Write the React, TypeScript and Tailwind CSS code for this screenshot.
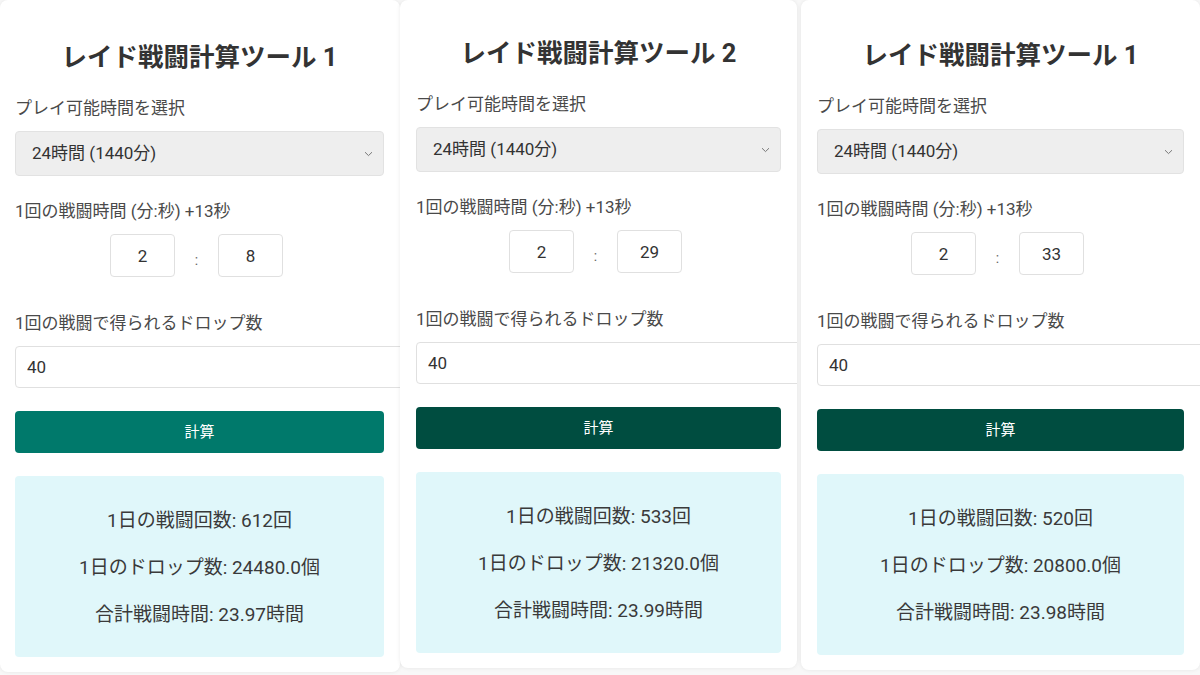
import React from "react";

type Tool = {
  title: string;
  min: string;
  sec: string;
  drops: string;
  results: string[];
  button: string;
  width: string;
  top: string;
  extra: string;
};

const tools: Tool[] = [
  {
    title: "レイド戦闘計算ツール 1",
    min: "2",
    sec: "8",
    drops: "40",
    results: ["1日の戦闘回数: 612回", "1日のドロップ数: 24480.0個", "合計戦闘時間: 23.97時間"],
    button: "bg-[#00796b]",
    width: "w-[400px] pl-[15px] pr-[16px]",
    top: "pt-[41px]",
    extra: "",
  },
  {
    title: "レイド戦闘計算ツール 2",
    min: "2",
    sec: "29",
    drops: "40",
    results: ["1日の戦闘回数: 533回", "1日のドロップ数: 21320.0個", "合計戦闘時間: 23.99時間"],
    button: "bg-[#004d40]",
    width: "w-[397px] px-[16px]",
    top: "pt-[37px]",
    extra: "",
  },
  {
    title: "レイド戦闘計算ツール 1",
    min: "2",
    sec: "33",
    drops: "40",
    results: ["1日の戦闘回数: 520回", "1日のドロップ数: 20800.0個", "合計戦闘時間: 23.98時間"],
    button: "bg-[#004d40]",
    width: "w-[399px] px-[16px]",
    top: "pt-[39px]",
    extra: "ml-[4px]",
  },
];

const font = { fontFamily: "Roboto, 'Noto Sans CJK JP', sans-serif" };

const ToolCard = ({ tool }: { tool: Tool }) => (
  <div
    className={`${tool.width} ${tool.top} ${tool.extra} pb-[15px] bg-white rounded-lg shadow-[0_0_4px_rgba(0,0,0,0.08)] overflow-hidden flex flex-col`}
  >
    <h2 className="text-[25.5px] leading-[32px] font-bold text-[#333] text-center">{tool.title}</h2>

    <div className="mt-[23px] text-[17px] leading-[24px] text-[#4a4a4a]">プレイ可能時間を選択</div>
    <div className="mt-[11px] h-[45px] flex items-center justify-between pl-[16px] pr-[10px] bg-[#eeeeee] border border-[#e2e2e2] rounded text-[17px] text-[#333]">
      <span>24時間 (1440分)</span>
      <svg width="9" height="6" viewBox="0 0 9 6" fill="none">
        <path d="M1 1.2L4.5 4.6L8 1.2" stroke="#777" strokeWidth="1" />
      </svg>
    </div>

    <div className="mt-[23px] text-[17px] leading-[24px] text-[#4a4a4a]">1回の戦闘時間 (分:秒) +13秒</div>
    <div className="mt-[11px] flex justify-center items-center pr-[6px]">
      <input
        readOnly
        value={tool.min}
        className="w-[65px] h-[43px] border border-[#e0e0e0] rounded text-center text-[17px] text-[#333] bg-white"
      />
      <span className="w-[43px] text-center text-[14px] text-[#666] pt-[10px]">:</span>
      <input
        readOnly
        value={tool.sec}
        className="w-[65px] h-[43px] border border-[#e0e0e0] rounded text-center text-[17px] text-[#333] bg-white"
      />
    </div>

    <div className="mt-[34px] text-[17px] leading-[24px] text-[#4a4a4a]">1回の戦闘で得られるドロップ数</div>
    <input
      readOnly
      value={tool.drops}
      className="mt-[11px] h-[42px] w-[calc(100%+28px)] shrink-0 border border-[#e0e0e0] rounded px-[11px] text-[17px] text-[#333] bg-white"
    />

    <button className={`mt-[23px] h-[42px] w-full rounded ${tool.button} text-white text-[15px]`}>計算</button>

    <div className="mt-[23px] h-[181px] rounded bg-[#e0f7fa] pt-[31px] flex flex-col items-center gap-5">
      {tool.results.map((r, i) => (
        <div key={i} className="text-[19px] leading-[27px] text-[#3a3a3a]">
          {r}
        </div>
      ))}
    </div>
  </div>
);

export default function App() {
  return (
    <div className="w-[1200px] h-[675px] bg-[#f8f8f8] flex items-start overflow-hidden" style={font}>
      {tools.map((t, i) => (
        <ToolCard key={i} tool={t} />
      ))}
    </div>
  );
}
